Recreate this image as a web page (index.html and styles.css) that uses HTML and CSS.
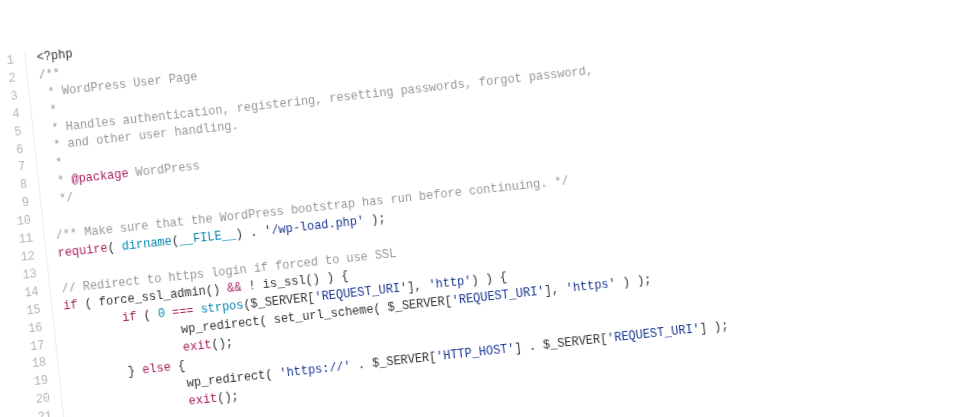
FILE: index.html
```html
<!DOCTYPE html>
<html lang="en">
<head>
<meta charset="utf-8">
<title>wp-login.php</title>
<link rel="stylesheet" href="styles.css">
</head>
<body>
<div class="stage">
  <div class="editor">
    <div class="gutter"><div>1</div><div>2</div><div>3</div><div>4</div><div>5</div><div>6</div><div>7</div><div>8</div><div>9</div><div>10</div><div>11</div><div>12</div><div>13</div><div>14</div><div>15</div><div>16</div><div>17</div><div>18</div><div>19</div><div>20</div><div>21</div></div>
    <div class="code">
<div class="ln">&lt;?php</div>
<div class="ln"><span class="c">/**</span></div>
<div class="ln"><span class="c"> * WordPress User Page</span></div>
<div class="ln"><span class="c"> *</span></div>
<div class="ln"><span class="c"> * Handles authentication, registering, resetting passwords, forgot password,</span></div>
<div class="ln"><span class="c"> * and other user handling.</span></div>
<div class="ln"><span class="c"> *</span></div>
<div class="ln"><span class="c"> * <span class="k">@package</span> WordPress</span></div>
<div class="ln"><span class="c"> */</span></div>
<div class="ln"> </div>
<div class="ln"><span class="c">/** Make sure that the WordPress bootstrap has run before continuing. */</span></div>
<div class="ln"><span class="k">require</span>( <span class="f">dirname</span>(<span class="f">__FILE__</span>) . <span class="s">'/wp-load.php'</span> );</div>
<div class="ln"> </div>
<div class="ln"><span class="c">// Redirect to https login if forced to use SSL</span></div>
<div class="ln"><span class="k">if</span> ( force_ssl_admin() <span class="k">&amp;&amp;</span> ! is_ssl() ) {</div>
<div class="ln">	<span class="k">if</span> ( <span class="f">0</span> <span class="k">===</span> <span class="f">strpos</span>($_SERVER[<span class="s">'REQUEST_URI'</span>], <span class="s">'http'</span>) ) {</div>
<div class="ln">		wp_redirect( set_url_scheme( $_SERVER[<span class="s">'REQUEST_URI'</span>], <span class="s">'https'</span> ) );</div>
<div class="ln">		<span class="k">exit</span>();</div>
<div class="ln">	} <span class="k">else</span> {</div>
<div class="ln">		wp_redirect( <span class="s">'https://'</span> . $_SERVER[<span class="s">'HTTP_HOST'</span>] . $_SERVER[<span class="s">'REQUEST_URI'</span>] );</div>
<div class="ln">		<span class="k">exit</span>();</div>
    </div>
  </div>
</div>
</body>
</html>
```

FILE: styles.css
```css
html, body {
  margin: 0;
  padding: 0;
  background: #ffffff;
  overflow: hidden;
}

.stage {
  width: 964px;
  height: 417px;
  overflow: hidden;
  padding-top: 50px;
  box-sizing: border-box;
}

.editor {
  display: flex;
  margin-left: -17px;
  width: 1000px;
  font-family: "Liberation Mono", "DejaVu Sans Mono", monospace;
  font-size: 11.95px;
  line-height: 17.9px;
  color: #333333;
  transform-origin: 53px 0;
  transform: rotate(-6.1deg);
  filter: blur(0.25px);
}

.gutter {
  width: 30px;
  padding-right: 11px;
  border-right: 1px solid #ececec;
  text-align: right;
  color: #b5b5b5;
  padding-bottom: 30px;
}

.code {
  padding-left: 11px;
}

.ln {
  height: 17.9px;
  white-space: pre;
  tab-size: 8;
  -moz-tab-size: 8;
}

.c { color: #969896; }
.k { color: #a71d5d; }
.f { color: #0086b3; }
.s { color: #183691; }
```
